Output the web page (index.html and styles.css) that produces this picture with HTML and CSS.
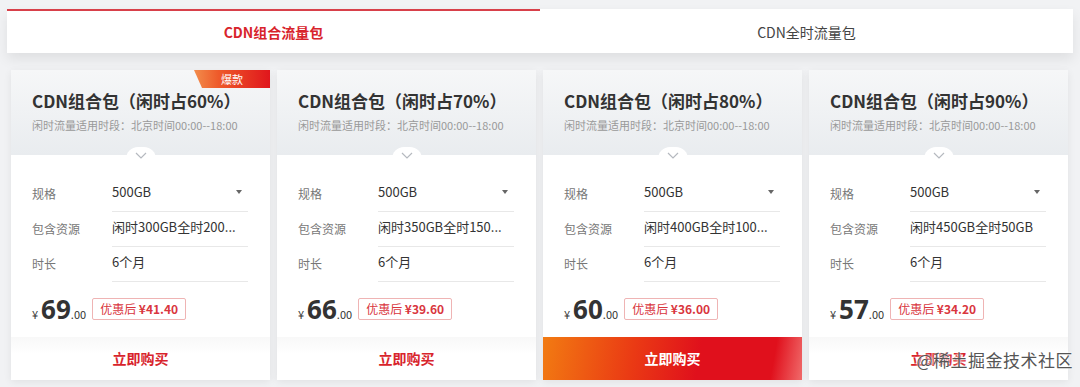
FILE: index.html
```html
<!DOCTYPE html>
<html lang="zh-CN">
<head>
    <meta charset="UTF-8">
    <meta name="viewport" content="width=device-width, initial-scale=1.0">
    <title>CDN流量包</title>
    <link rel="stylesheet" href="styles.css">
</head>
<body>

<div class="tabs">
    <div class="tab active">CDN组合流量包</div>
    <div class="tab">CDN全时流量包</div>
</div>

<div class="cards">
    <div class="card">
        <span class="badge">爆款</span>
        <div class="card-head">
            <h3 class="title">CDN组合包（闲时占60%）</h3>
            <p class="sub">闲时流量适用时段：北京时间00:00--18:00</p>
            <span class="notch"><svg width="12" height="7" viewBox="0 0 12 7"><path d="M1 1l5 5 5-5" fill="none" stroke="#b5b9bf" stroke-width="1.2"/></svg></span>
        </div>
        <div class="card-body">
            <div class="row"><span class="label">规格</span><span class="value select">500GB<i class="caret"></i></span></div>
            <div class="row"><span class="label">包含资源</span><span class="value">闲时300GB全时200...</span></div>
            <div class="row"><span class="label">时长</span><span class="value">6个月</span></div>
            <div class="price-row">
                <span class="price"><small>¥</small><b>69</b><em>.00</em></span>
                <span class="discount"><span>优惠后</span> ¥41.40</span>
            </div>
        </div>
        <div class="buy">立即购买</div>
    </div>

    <div class="card">
        <div class="card-head">
            <h3 class="title">CDN组合包（闲时占70%）</h3>
            <p class="sub">闲时流量适用时段：北京时间00:00--18:00</p>
            <span class="notch"><svg width="12" height="7" viewBox="0 0 12 7"><path d="M1 1l5 5 5-5" fill="none" stroke="#b5b9bf" stroke-width="1.2"/></svg></span>
        </div>
        <div class="card-body">
            <div class="row"><span class="label">规格</span><span class="value select">500GB<i class="caret"></i></span></div>
            <div class="row"><span class="label">包含资源</span><span class="value">闲时350GB全时150...</span></div>
            <div class="row"><span class="label">时长</span><span class="value">6个月</span></div>
            <div class="price-row">
                <span class="price"><small>¥</small><b>66</b><em>.00</em></span>
                <span class="discount"><span>优惠后</span> ¥39.60</span>
            </div>
        </div>
        <div class="buy">立即购买</div>
    </div>

    <div class="card">
        <div class="card-head">
            <h3 class="title">CDN组合包（闲时占80%）</h3>
            <p class="sub">闲时流量适用时段：北京时间00:00--18:00</p>
            <span class="notch"><svg width="12" height="7" viewBox="0 0 12 7"><path d="M1 1l5 5 5-5" fill="none" stroke="#b5b9bf" stroke-width="1.2"/></svg></span>
        </div>
        <div class="card-body">
            <div class="row"><span class="label">规格</span><span class="value select">500GB<i class="caret"></i></span></div>
            <div class="row"><span class="label">包含资源</span><span class="value">闲时400GB全时100...</span></div>
            <div class="row"><span class="label">时长</span><span class="value">6个月</span></div>
            <div class="price-row">
                <span class="price"><small>¥</small><b>60</b><em>.00</em></span>
                <span class="discount"><span>优惠后</span> ¥36.00</span>
            </div>
        </div>
        <div class="buy hot">立即购买</div>
    </div>

    <div class="card">
        <div class="card-head">
            <h3 class="title">CDN组合包（闲时占90%）</h3>
            <p class="sub">闲时流量适用时段：北京时间00:00--18:00</p>
            <span class="notch"><svg width="12" height="7" viewBox="0 0 12 7"><path d="M1 1l5 5 5-5" fill="none" stroke="#b5b9bf" stroke-width="1.2"/></svg></span>
        </div>
        <div class="card-body">
            <div class="row"><span class="label">规格</span><span class="value select">500GB<i class="caret"></i></span></div>
            <div class="row"><span class="label">包含资源</span><span class="value">闲时450GB全时50GB</span></div>
            <div class="row"><span class="label">时长</span><span class="value">6个月</span></div>
            <div class="price-row">
                <span class="price"><small>¥</small><b>57</b><em>.00</em></span>
                <span class="discount"><span>优惠后</span> ¥34.20</span>
            </div>
        </div>
        <div class="buy">立即购买</div>
        <span class="watermark">@稀土掘金技术社区</span>
    </div>
</div>

</body>
</html>
```

FILE: styles.css
```css
body {
    margin: 0;
    background-color: #f1f2f4;
    font-family: "Noto Sans CJK SC", "Noto Sans", sans-serif;
    color: #333;
    width: 1080px;
    height: 387px;
    overflow: hidden;
}

.tabs {
    display: flex;
    margin: 9px 7px 0 7px;
    box-shadow: 0 6px 12px rgba(0, 0, 0, 0.08);
}

.tab {
    flex: 1;
    height: 42px;
    line-height: 42px;
    text-align: center;
    background-color: #fff;
    font-size: 14px;
    color: #444;
    border-top: 2px solid transparent;
}

.tab.active {
    color: #d8242c;
    font-weight: bold;
    border-top-color: #d8404a;
}

.cards {
    display: grid;
    grid-template-columns: repeat(4, 259px);
    gap: 7px;
    padding: 17px 0 0 11px;
}

.card {
    position: relative;
    height: 310px;
    background-color: #fff;
    box-shadow: 0 2px 8px rgba(0, 0, 0, 0.07);
    display: flex;
    flex-direction: column;
}

.badge {
    position: absolute;
    z-index: 2;
    top: 0;
    right: 0;
    width: 86px;
    height: 18px;
    line-height: 18px;
    text-align: center;
    padding-left: 10px;
    box-sizing: border-box;
    font-size: 11px;
    color: #fff;
    background: linear-gradient(90deg, #f4a25a 0%, #ee5a2a 40%, #e0161c 100%);
    clip-path: polygon(10px 0, 100% 0, 100% 100%, 18px 100%);
}

.card-head {
    position: relative;
    height: 90px;
    padding: 20px 0 0 21px;
    box-sizing: border-box;
    background: linear-gradient(180deg, #f6f7f8 0%, #e9ecef 100%);
}

.title {
    margin: 0;
    font-size: 17px;
    line-height: 22px;
    font-weight: bold;
    color: #333;
}

.sub {
    margin: 5px 0 0 0;
    font-size: 11px;
    line-height: 16px;
    color: #999;
}

.notch {
    position: absolute;
    left: 50%;
    bottom: -8px;
    width: 30px;
    height: 16px;
    margin-left: -15px;
    background-color: #fff;
    border-radius: 12px 12px 0 0;
    display: flex;
    justify-content: center;
    align-items: center;
}

.card-body {
    flex: 1;
    padding: 21px 21px 0 21px;
}

.row {
    display: flex;
    align-items: center;
    height: 35px;
}

.label {
    width: 80px;
    font-size: 12px;
    color: #777;
}

.value {
    flex: 1;
    position: relative;
    height: 35px;
    line-height: 32px;
    font-size: 13px;
    color: #333;
    border-bottom: 1px solid #e8e8e8;
    margin-right: 1px;
}

.caret {
    position: absolute;
    right: 6px;
    top: 14px;
    border-left: 3px solid transparent;
    border-right: 3px solid transparent;
    border-top: 4px solid #666;
}

.price-row {
    display: flex;
    align-items: center;
    height: 56px;
    gap: 6px;
}

.price {
    white-space: nowrap;
    color: #333;
}

.price small {
    font-size: 11px;
    margin-right: 3px;
}

.price b {
    font-family: "Open Sans", Roboto, sans-serif;
    font-size: 26px;
    font-weight: bold;
}

.price em {
    font-style: normal;
    font-size: 11px;
}

.discount {
    height: 20px;
    line-height: 20px;
    padding: 0 7px;
    border: 1px solid #efb4b4;
    border-radius: 2px;
    font-size: 12px;
    font-weight: bold;
    color: #d9363e;
}

.discount span {
    font-weight: normal;
}

.buy {
    height: 43px;
    line-height: 43px;
    text-align: center;
    font-size: 14px;
    font-weight: bold;
    color: #d8242c;
    background: linear-gradient(180deg, #f8f8f8 0%, #fff 40%);
}

.buy.hot {
    color: #fff;
    background: linear-gradient(100deg, #f27b12 0%, #ea3a14 35%, #e0101c 60%, #e0101c 88%, #f06a6a 100%);
}

.watermark {
    position: absolute;
    right: -5px;
    bottom: 8px;
    font-size: 17px;
    color: #555;
    letter-spacing: 0.5px;
    text-shadow: 0 0 2px #fff, 0 0 3px #fff;
}
```
